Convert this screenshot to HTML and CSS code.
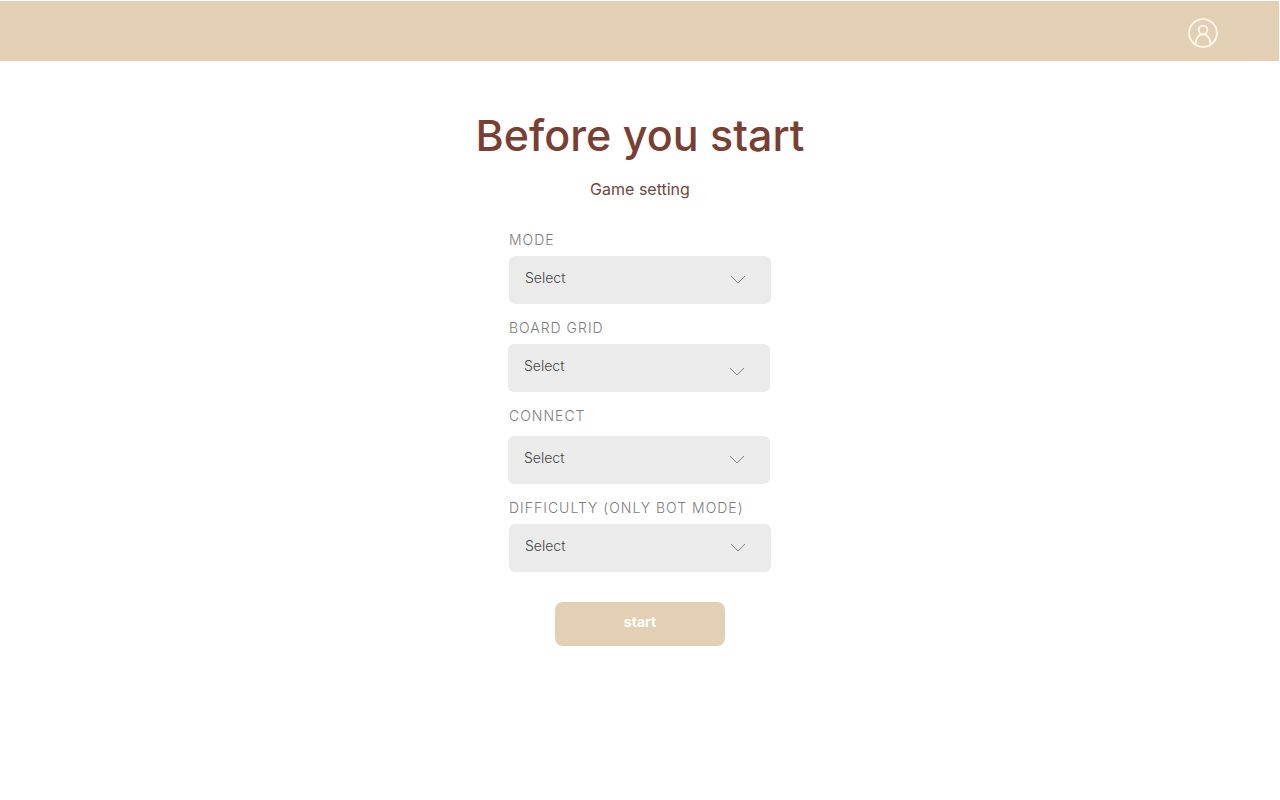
FILE: index.html
```html
<!DOCTYPE html>
<html lang="en">
<head>
<meta charset="utf-8">
<meta name="viewport" content="width=device-width, initial-scale=1">
<title>Before you start</title>
<link rel="stylesheet" href="styles.css">
</head>
<body>
<header class="topbar">
  <a class="profile" href="#profile" aria-label="Profile">
    <svg class="profile-icon" viewBox="0 0 30 30" aria-hidden="true">
      <circle cx="15" cy="15" r="13.9"/>
      <circle cx="15" cy="12" r="4.3"/>
      <path d="M7.3 26.3C8 20.5 10.7 16.4 15 16.4s7 4.1 7.7 9.9"/>
    </svg>
  </a>
</header>
<main class="content">
  <h1 class="title">Before you start</h1>
  <p class="subtitle">Game setting</p>
  <form class="settings">
    <div class="field">
      <label class="label" for="mode">MODE</label>
      <div class="control">
        <select class="select" id="mode"><option>Select</option></select>
        <svg class="chevron" viewBox="0 0 16 9" aria-hidden="true"><path d="M1 1l7 7 7-7"/></svg>
      </div>
    </div>
    <div class="field">
      <label class="label" for="grid">BOARD GRID</label>
      <div class="control control-shifted">
        <select class="select" id="grid"><option>Select</option></select>
        <svg class="chevron chevron-low" viewBox="0 0 16 9" aria-hidden="true"><path d="M1 1l7 7 7-7"/></svg>
      </div>
    </div>
    <div class="field field-roomy">
      <label class="label" for="connect">CONNECT</label>
      <div class="control control-shifted">
        <select class="select" id="connect"><option>Select</option></select>
        <svg class="chevron" viewBox="0 0 16 9" aria-hidden="true"><path d="M1 1l7 7 7-7"/></svg>
      </div>
    </div>
    <div class="field">
      <label class="label" for="difficulty">DIFFICULTY (ONLY BOT MODE)</label>
      <div class="control">
        <select class="select" id="difficulty"><option>Select</option></select>
        <svg class="chevron" viewBox="0 0 16 9" aria-hidden="true"><path d="M1 1l7 7 7-7"/></svg>
      </div>
    </div>
    <button class="start" type="button">start</button>
  </form>
</main>
</body>
</html>
```
FILE: styles.css
```css
* { box-sizing: border-box; }

body {
  margin: 0;
  background: #fff;
  font-family: Inter, "Liberation Sans", sans-serif;
}

.topbar {
  display: flex;
  align-items: center;
  justify-content: flex-end;
  height: 60px;
  margin: 1px 1px 0 0;
  padding: 3px 61px 0 16px;
  background: #e3cfb4;
}

.profile { display: flex; }

.profile-icon {
  width: 30px;
  height: 30px;
  fill: none;
  stroke: #fffaf0;
  stroke-width: 1.8;
}

.content {
  display: flex;
  flex-direction: column;
  align-items: center;
  padding: 46px 16px 32px;
}

.title {
  margin: 0;
  color: #7a3f33;
  font-size: 43px;
  font-weight: 500;
  line-height: 56px;
  text-align: center;
}

.subtitle {
  margin: 14px 0 0;
  color: #70463c;
  font-size: 16px;
  line-height: 24px;
}

.settings {
  display: flex;
  flex-direction: column;
  gap: 16px;
  width: 100%;
  max-width: 262px;
  margin-top: 31px;
}

.field {
  display: flex;
  flex-direction: column;
  gap: 8px;
}

.field-roomy { gap: 12px; }

.label {
  color: #7c7c7c;
  font-size: 14px;
  font-weight: 300;
  line-height: 16px;
  letter-spacing: 1px;
  white-space: nowrap;
}

.control {
  display: grid;
  align-items: center;
}

.control-shifted { margin: 0 1px 0 -1px; }

.select,
.chevron { grid-area: 1 / 1; }

.select {
  appearance: none;
  width: 100%;
  height: 48px;
  padding: 0 48px 4px 16px;
  border: 0;
  border-radius: 6px;
  background: #ebebeb;
  color: #444;
  font: 300 14px/20px Inter, "Liberation Sans", sans-serif;
}

.chevron {
  justify-self: end;
  width: 16px;
  height: 9px;
  margin-right: 25px;
  margin-bottom: 1px;
  fill: none;
  stroke: #777;
  stroke-width: 0.9;
  pointer-events: none;
}

.chevron-low { margin-top: 8px; }

.start {
  align-self: center;
  width: 170px;
  height: 44px;
  margin-top: 14px;
  padding: 0 0 4px;
  border: 0;
  border-radius: 8px;
  background: #e3cfb4;
  color: #fff;
  font: 700 14px/20px Inter, "Liberation Sans", sans-serif;
}
```
